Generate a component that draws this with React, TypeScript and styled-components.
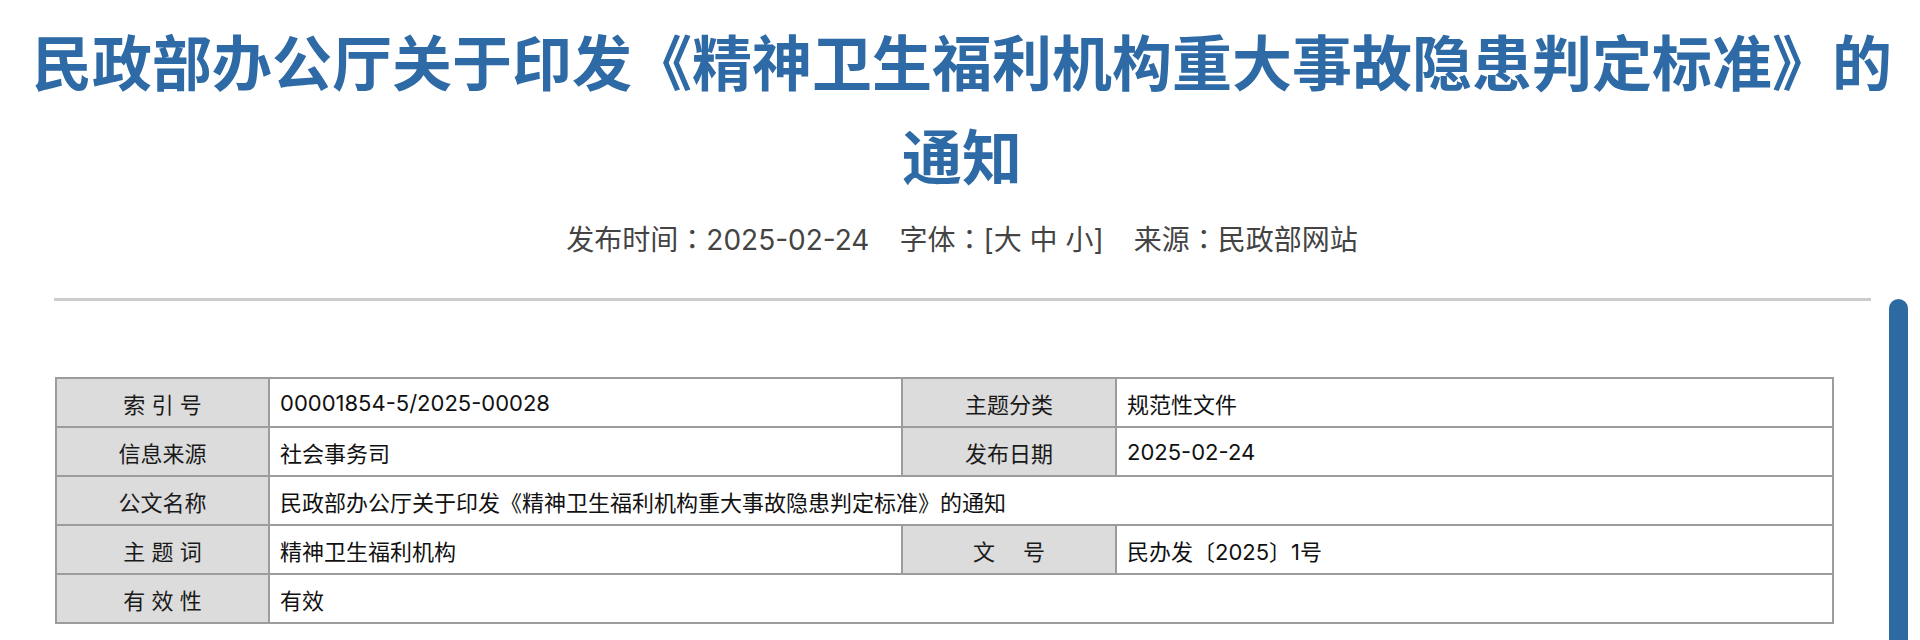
import React from "react";
import styled, { createGlobalStyle } from "styled-components";

const GlobalStyle = createGlobalStyle`
  html, body {
    margin: 0;
    padding: 0;
    background: #ffffff;
  }
  body {
    font-family: Inter, "Noto Sans CJK SC", "Noto Sans", sans-serif;
    overflow: hidden;
  }
`;

const Page = styled.div`
  width: 1920px;
  min-height: 640px;
  box-sizing: border-box;
`;

const Title = styled.h1`
  margin: 13px 0 0;
  padding-left: 4px;
  font-family: "Noto Sans CJK SC", sans-serif;
  font-size: 60px;
  line-height: 94px;
  font-weight: 700;
  color: #2e6aa5;
  text-align: center;
`;

const Meta = styled.div`
  margin-top: 17px;
  display: flex;
  justify-content: center;
  gap: 30px;
  padding-left: 4px;
  font-size: 28px;
  line-height: 40px;
  color: #444444;
`;

const MetaItem = styled.span`
  white-space: pre;
`;

const Colon = styled.span`
  font-family: "Noto Sans CJK TC", sans-serif;
`;

const Divider = styled.div`
  margin: 38px 49px 0 54px;
  height: 3px;
  background: #cccccc;
`;

const InfoTable = styled.table`
  margin: 76px 0 0 55px;
  width: 1777px;
  border-collapse: collapse;
  table-layout: fixed;
  font-size: 22px;
  color: #111111;
`;

const Cell = styled.td`
  border: 2px solid #9c9c9c;
  height: 49px;
  padding: 0 10px;
  box-sizing: border-box;
  white-space: nowrap;
`;

const LabelCell = styled(Cell)<{ $wide?: boolean }>`
  background: #dcdcdc;
  text-align: center;
  padding: 0;
  word-spacing: ${(p) => (p.$wide ? "22px" : "0")};
  color: #1a1a1a;
`;

const ScrollThumb = styled.div`
  position: fixed;
  top: 299px;
  right: 12px;
  bottom: 0;
  width: 19px;
  background: #2e6aa2;
  border-radius: 10px 10px 0 0;
`;

export default function App() {
  return (
    <Page>
      <GlobalStyle />
      <Title>
        民政部办公厅关于印发《精神卫生福利机构重大事故隐患判定标准》的通知
      </Title>
      <Meta>
        <MetaItem>
          发布时间<Colon>：</Colon>2025-02-24
        </MetaItem>
        <MetaItem>
          字体<Colon>：</Colon>[大 中 小]
        </MetaItem>
        <MetaItem>
          来源<Colon>：</Colon>民政部网站
        </MetaItem>
      </Meta>
      <Divider />
      <InfoTable>
        <colgroup>
          <col style={{ width: 213 }} />
          <col style={{ width: 633 }} />
          <col style={{ width: 214 }} />
          <col style={{ width: 717 }} />
        </colgroup>
        <tbody>
          <tr>
            <LabelCell>索 引 号</LabelCell>
            <Cell>00001854-5/2025-00028</Cell>
            <LabelCell>主题分类</LabelCell>
            <Cell>规范性文件</Cell>
          </tr>
          <tr>
            <LabelCell>信息来源</LabelCell>
            <Cell>社会事务司</Cell>
            <LabelCell>发布日期</LabelCell>
            <Cell>2025-02-24</Cell>
          </tr>
          <tr>
            <LabelCell>公文名称</LabelCell>
            <Cell colSpan={3}>
              民政部办公厅关于印发《精神卫生福利机构重大事故隐患判定标准》的通知
            </Cell>
          </tr>
          <tr>
            <LabelCell>主 题 词</LabelCell>
            <Cell>精神卫生福利机构</Cell>
            <LabelCell $wide>文 号</LabelCell>
            <Cell>民办发〔2025〕1号</Cell>
          </tr>
          <tr>
            <LabelCell>有 效 性</LabelCell>
            <Cell colSpan={3}>有效</Cell>
          </tr>
        </tbody>
      </InfoTable>
      <ScrollThumb />
    </Page>
  );
}
